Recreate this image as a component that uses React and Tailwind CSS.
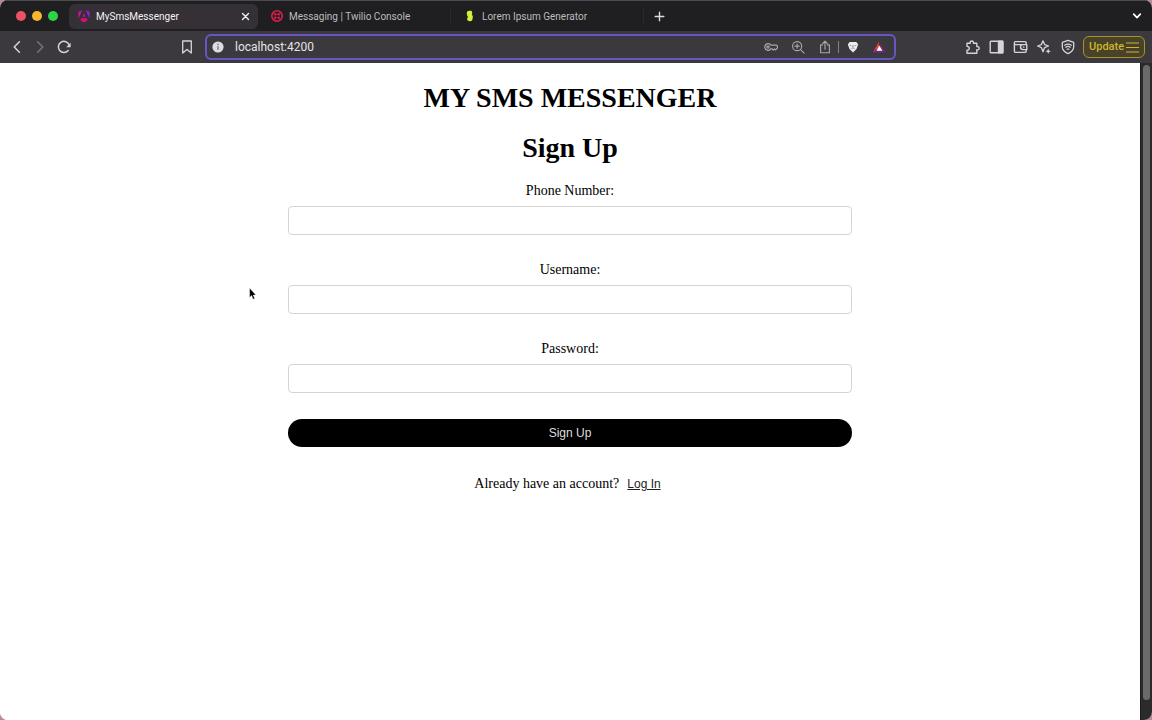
import { useState } from 'react';

const TABS = [
  { title: 'MySmsMessenger', icon: AngularMark },
  { title: 'Messaging | Twilio Console', icon: TwilioMark },
  { title: 'Lorem Ipsum Generator', icon: LoremMark },
];

export default function App() {
  return (
    <div className="relative flex h-screen flex-col bg-[#b58a99]">
      <div className="flex min-h-0 flex-1 flex-col overflow-hidden rounded-lg bg-white">
        <TabStrip />
        <Toolbar />
        <div className="flex min-h-0 flex-1">
          <main className="min-w-0 flex-1 overflow-hidden bg-white">
            <SignUp />
          </main>
          <div className="w-3 border-l border-[#1c1c1c] bg-[#2b2b2c] px-0.5 pt-0.5 pb-5">
            <div className="h-full rounded-full bg-[#6a6a6b]" />
          </div>
        </div>
      </div>
      <Pointer />
    </div>
  );
}

function TabStrip() {
  return (
    <header className="flex h-[31px] items-center border-t border-[#4b4b50] bg-[#1f1e21] pr-2 font-[Roboto,sans-serif]">
      <div className="flex w-[69px] shrink-0 gap-[6px] pl-4">
        <span className="size-[10px] rounded-full bg-[#ee5163]" />
        <span className="size-[10px] rounded-full bg-[#f6b62e]" />
        <span className="size-[10px] rounded-full bg-[#2fd346]" />
      </div>
      <nav className="flex">
        {TABS.map(({ title, icon: Mark }, i) => (
          <div key={title} className="flex w-[193px] items-center pr-1">
            <button
              className={
                i === 0
                  ? 'flex h-[25px] flex-1 items-center gap-[5px] rounded-md bg-[#343036] px-2 text-[10px] text-[#f4f3f5]'
                  : 'flex h-[25px] flex-1 items-center gap-[5px] px-2 text-[10px] text-[#bdbcbf]'
              }
            >
              <Mark />
              <span className="flex-1 text-left whitespace-nowrap">{title}</span>
              {i === 0 && (
                <Icon className="size-[9px]" box="0 0 9 9" width="1.4">
                  <path d="M1.5 1.5l6 6M7.5 1.5l-6 6" />
                </Icon>
              )}
            </button>
            {i > 0 && <span className="h-4 w-px bg-[#29282c]" />}
          </div>
        ))}
      </nav>
      <button aria-label="New tab" className="ml-0.5 p-1 text-[#dddcdf]">
        <Icon className="size-[11px]" box="0 0 11 11" width="1.4"><path d="M5.5 1.2v8.6M1.2 5.5h8.6" /></Icon>
      </button>
      <button aria-label="Search tabs" className="ml-auto p-0.5 text-white">
        <Icon className="size-[10px]" box="0 0 10 10" width="1.7"><path d="M1.7 3.2L5 6.6l3.3-3.4" /></Icon>
      </button>
    </header>
  );
}

function Toolbar() {
  const [url, setUrl] = useState('localhost:4200');

  return (
    <div className="flex h-8 items-center bg-[#3b393e] pr-[7px] pl-[9px] font-[Roboto,sans-serif] text-[#d5d4d7]">
      <div className="flex w-[186px] shrink-0 items-center">
        <button aria-label="Back">
          <Icon><path d="M10.4 2.8L5.2 8l5.2 5.2" /></Icon>
        </button>
        <button aria-label="Forward" className="ml-[7px] text-[#78767c]">
          <Icon><path d="M5.6 2.8L10.8 8l-5.2 5.2" /></Icon>
        </button>
        <button aria-label="Reload" className="ml-2">
          <Icon>
            <path d="M12.2 11.6A5.6 5.6 0 1 1 13.2 6" />
            <path d="M14.6 3.8v4.4h-4.4z" fill="currentColor" stroke="none" />
          </Icon>
        </button>
        <button aria-label="Bookmark" className="ml-auto">
          <Icon width="1.3"><path d="M3.7 2h8.6v12L8 10.4 3.7 14z" /></Icon>
        </button>
      </div>
      <div className="ml-[10px] flex h-[26px] min-w-0 flex-1 items-center rounded-md border-2 border-[#6657c4] bg-[#3b393e] pr-2 pl-[5px]">
        <svg viewBox="0 0 12 12" className="size-3 shrink-0">
          <circle cx="6" cy="6" r="5.6" fill="#dddce2" />
          <path d="M6 5.2v3.5" stroke="#77757c" strokeWidth="1.4" />
          <circle cx="6" cy="3.4" r=".8" fill="#77757c" />
        </svg>
        <input
          aria-label="Address"
          value={url}
          onChange={(e) => setUrl(e.target.value)}
          className="ml-[11px] min-w-0 flex-1 bg-transparent text-xs text-[#e4e3e6] outline-none"
        />
        <div className="flex items-center text-[#a9a8ac]">
          <Icon className="size-[14px]" width="1.4">
            <path d="M7.8 5.8a3.8 3.8 0 1 0 0 4.4h1.600l1.200 1.400 1.400-1.400 1.300 1.100L15.400 9V7l-1.400-1.200z" />
            <circle cx="4.600" cy="8" r="1.300" />
          </Icon>
          <Icon className="ml-[13px] size-[14px]" width="1.3">
            <circle cx="7" cy="7" r="5.2" />
            <path d="M10.9 10.9l4 4M4.6 7h4.8M7 4.6v4.8" />
          </Icon>
          <Icon className="ml-[13px] size-[14px]" width="1.3">
            <path d="M5.2 5.6H3v9h10v-9h-2.2M8 10.5V1.6M5.4 4L8 1.4 10.6 4" />
          </Icon>
          <span className="mx-[6px] h-3 w-px bg-[#858388]" />
          <svg viewBox="0 0 14 14" className="ml-px size-[14px]">
            <path d="M3.6 2h6.8l1.8 2.5L10.5 9 7 12.6 3.5 9 1.8 4.5z" fill="#eeedf0" />
            <path d="M3.6 5.2l2 .8M10.4 5.2l-2 .8M5.3 8.7L7 7.8l1.7.9M7 5v2.4" stroke="#77757c" strokeWidth=".7" fill="none" />
          </svg>
          <svg viewBox="0 0 14 14" className="ml-3 size-[14px]">
            <path d="M7 1.6L1 12.6l6-3.2z" fill="#ee3b3b" />
            <path d="M7 1.6l6 11L9.6 9z" fill="#9e1f63" />
            <path d="M1 12.6h12L10 9.6H4z" fill="#662d91" />
            <path d="M7.4 5.6l3 5.2H4.6z" fill="#fff" />
          </svg>
        </div>
      </div>
      <div className="flex w-[249px] shrink-0 items-center justify-end gap-[7px]">
        <div className="flex items-center gap-2">
          <button aria-label="Extensions">
            <Icon width="1.4">
              <path d="M3 4.200h3.200c-.7-3 3.800-3 3.200 0h3.400v3.400c3.200-.6 3.200 3.800 0 3.200v3.400H3v-3c3 .2 3-4 0-3.800z" />
            </Icon>
          </button>
          <button aria-label="Sidebar">
            <Icon width="1.4">
              <rect x="2.2" y="2.2" width="12.6" height="11.6" rx=".8" />
              <path d="M10.500 2.200h4.300v11.600h-4.300z" fill="currentColor" />
            </Icon>
          </button>
          <button aria-label="Wallet">
            <Icon width="1.4">
              <path d="M14.200 5.600V3.800A1.200 1.200 0 0 0 13 2.600H3.600a1.200 1.200 0 0 0-1.200 1.200v8.400a1.200 1.200 0 0 0 1.200 1.200H13a1.200 1.200 0 0 0 1.200-1.200v-1.600M2.600 5.600h12.200v5H11a2.500 2.500 0 0 1 0-5M11.400 8.100h.6" />
            </Icon>
          </button>
          <button aria-label="Leo AI">
            <Icon width="1.3">
              <path d="M7 1.8l1.6 3.8L12.6 7 8.6 8.6 7 12.8 5.4 8.6 1.6 7l3.8-1.4z" />
              <path d="M12.2 9.4l.8 2 2 .8-2 .8-.8 2-.8-2-2-.8 2-.8z" fill="currentColor" stroke="none" />
            </Icon>
          </button>
          <button aria-label="VPN">
            <Icon width="1.3">
              <path d="M8 1.4l5.7 2v4.4c0 3.2-2.6 5.5-5.7 6.8-3.1-1.3-5.7-3.6-5.7-6.8V3.4z" />
              <path d="M4.7 6.2c2-1.4 4.6-1.4 6.6 0M5.8 8.2c1.3-.9 3.1-.9 4.4 0M7.2 10.2h1.6" />
            </Icon>
          </button>
        </div>
        <button className="flex h-[22px] w-[62px] shrink-0 items-center justify-between rounded-md border border-[#a99325] bg-[#48422a] px-[5px] text-[11px] font-medium text-[#cdb62c]">
          Update
          <svg viewBox="0 0 13 11" className="h-[11px] w-[13px] shrink-0" fill="none" stroke="currentColor" strokeWidth="1.2">
            <path d="M0 1h13M0 5.500h13M0 10h13" />
          </svg>
        </button>
      </div>
    </div>
  );
}

function SignUp() {
  return (
    <div className="mx-auto w-full max-w-[564px] pt-[19px] text-center font-['Liberation_Serif',serif] text-sm leading-[18px] text-black">
      <h1 className="text-[28px] leading-8 font-bold">MY SMS MESSENGER</h1>
      <h2 className="mt-[18px] text-[28px] leading-8 font-bold">Sign Up</h2>
      <form className="mt-[18px] flex flex-col gap-[26px]" onSubmit={(e) => e.preventDefault()}>
        <Field id="phone" label="Phone Number:" type="tel" />
        <Field id="username" label="Username:" type="text" />
        <Field id="password" label="Password:" type="password" />
        <button className="h-7 rounded-full bg-black font-['Liberation_Sans',sans-serif] text-xs text-[#dedede]">Sign Up</button>
      </form>
      <p className="mt-7">
        Already have an account?
        <button className="ml-[3px] px-[5px] font-['Liberation_Sans',sans-serif] text-xs text-[#222] underline">Log In</button>
      </p>
    </div>
  );
}

const Field = ({ id, label, type }) => (
  <div className="flex flex-col gap-[6px]">
    <label htmlFor={id}>{label}</label>
    <input id={id} type={type} className="h-[29px] w-full rounded border border-[#d4d4d4] bg-white px-2 outline-none" />
  </div>
);

const Icon = ({ className = 'size-4', box = '0 0 16 16', width = '1.5', children }) => (
  <svg viewBox={box} className={className} fill="none" stroke="currentColor" strokeWidth={width} strokeLinecap="round" strokeLinejoin="round">
    {children}
  </svg>
);

function AngularMark() {
  return (
    <svg viewBox="0 0 14 14" className="size-[14px]">
      <defs>
        <linearGradient id="ng" x1=".2" y1="1" x2=".8" y2="0">
          <stop offset="0" stopColor="#f0065c" />
          <stop offset=".5" stopColor="#c90f9c" />
          <stop offset="1" stopColor="#8a1ce8" />
        </linearGradient>
      </defs>
      <path d="M8.7 1l4.2 1.9-.6 6.5zM5.3 1L1.1 2.9l.6 6.5zM7 4.2l1.5 3.6h-3zM4.3 9.3h5.4l.9 2L7 13.4l-3.6-2.1z" fill="url(#ng)" />
    </svg>
  );
}

function TwilioMark() {
  return (
    <svg viewBox="0 0 14 14" className="size-[14px]" fill="#df1f4c">
      <circle cx="7" cy="7" r="5.2" fill="none" stroke="#df1f4c" strokeWidth="1.6" />
      <circle cx="5.3" cy="5.3" r="1.3" />
      <circle cx="8.7" cy="5.3" r="1.3" />
      <circle cx="5.3" cy="8.7" r="1.3" />
      <circle cx="8.7" cy="8.7" r="1.3" />
    </svg>
  );
}

function LoremMark() {
  return (
    <svg viewBox="0 0 14 14" className="size-[14px]" fill="#d5ee3c">
      <path d="M4.2 2.4C5 1.6 8 1.4 8.8 2.2c.6.8.5 2.6 0 3.6.8.6 1.2 1.4 1 2.4-.1.6-.2.8-.2 1.4 0 1.6-.8 2.6-2.6 2.6-2 0-3-1-2.900-2.400 0-.8.800-1.200.800-1.800 0-.8-.8-1-.9-2C3.900 5 3.600 3.400 4.200 2.400z" />
    </svg>
  );
}

function Pointer() {
  return (
    <svg viewBox="0 0 9 14" className="pointer-events-none absolute top-[287px] left-[249px] h-[14px] w-[9px]">
      <path d="M.6 1v9.400l2-1.800 1.500 3.600 1.600-.7-1.500-3.400h2.700z" fill="#000" stroke="#fff" strokeWidth=".4" />
    </svg>
  );
}
